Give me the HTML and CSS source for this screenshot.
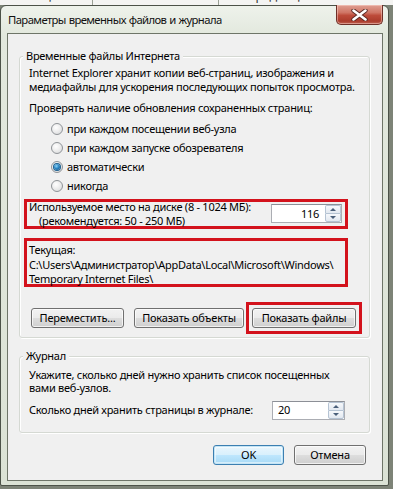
FILE: index.html
```html
<!DOCTYPE html>
<html lang="ru">
<head>
<meta charset="utf-8">
<title>Параметры временных файлов и журнала</title>
<link rel="stylesheet" href="styles.css">
</head>
<body>
<div class="screen">
  <div class="tabs">
    <div class="tab tab-1"><span>Общие</span></div>
    <div class="tab tab-2"><span>Безопасность</span></div>
    <div class="tab tab-3"><span>Конфиденциальность</span></div>
  </div>
  <div class="window">
    <div class="titlebar">
      <div class="title">Параметры временных файлов и журнала</div>
      <div class="close">
        <svg width="17" height="12" viewBox="0 0 17 12" aria-hidden="true">
          <path d="M2.5 1.5 L14.5 10.5 M14.5 1.5 L2.5 10.5" stroke="#5a2a24" stroke-width="4.4" stroke-linecap="round"/>
          <path d="M2.5 1.5 L14.5 10.5 M14.5 1.5 L2.5 10.5" stroke="#ffffff" stroke-width="2.6" stroke-linecap="round"/>
        </svg>
      </div>
    </div>
    <div class="client">
      <div class="group group-temp">
        <div class="legend">Временные файлы Интернета</div>
        <p class="text desc">Internet Explorer хранит копии веб-страниц, изображения и<br>медиафайлы для ускорения последующих попыток просмотра.</p>
        <p class="text check">Проверять наличие обновления сохраненных страниц:</p>
        <div class="radios">
          <div class="radio"><span class="circle"></span>при каждом посещении веб-узла</div>
          <div class="radio"><span class="circle"></span>при каждом запуске обозревателя</div>
          <div class="radio"><span class="circle checked"></span>автоматически</div>
          <div class="radio"><span class="circle"></span>никогда</div>
        </div>
        <div class="mark disk">
          <div class="disk-text">
            <div>Используемое место на диске (8 - 1024 МБ):</div>
            <div class="rec">(рекомендуется: 50 - 250 МБ)</div>
          </div>
          <div class="spin spin-right">
            <span class="spin-value">116</span>
            <span class="spin-arrows"><span class="arrow up"></span><span class="arrow down"></span></span>
          </div>
        </div>
        <div class="mark current">
          <div class="text cur-label">Текущая:</div>
          <div class="text path">C:\Users\Администратор\AppData\Local\Microsoft\Windows\<br>Temporary Internet Files\</div>
        </div>
        <div class="btn-row">
          <button class="btn btn-move">Переместить...</button>
          <button class="btn btn-objects">Показать объекты</button>
          <span class="mark-btn"><button class="btn btn-files">Показать файлы</button></span>
        </div>
      </div>
      <div class="group group-log">
        <div class="legend">Журнал</div>
        <p class="text desc">Укажите, сколько дней нужно хранить список посещенных<br>вами веб-узлов.</p>
        <div class="days">
          <span>Сколько дней хранить страницы в журнале:</span>
          <div class="spin spin-left">
            <span class="spin-value">20</span>
            <span class="spin-arrows"><span class="arrow up"></span><span class="arrow down"></span></span>
          </div>
        </div>
      </div>
      <div class="footer">
        <button class="btn btn-ok">OK</button>
        <button class="btn btn-cancel">Отмена</button>
      </div>
    </div>
  </div>
</div>
</body>
</html>
```

FILE: styles.css
```css
* { box-sizing: border-box; }
html, body { margin: 0; padding: 0; }
body {
  width: 393px;
  height: 489px;
  overflow: hidden;
  background: #6f756b;
  font-family: "Noto Sans", "Open Sans", "DejaVu Sans", sans-serif;
  color: #000;
}
.screen {
  width: 393px;
  height: 489px;
  overflow: hidden;
  background: #7d8377;
}

/* parent dialog tabs, mostly hidden behind */
.tabs {
  display: flex;
  height: 5px;
  overflow: hidden;
  background: #f4f4f2;
}
.tab {
  height: 5px;
  overflow: hidden;
  border-right: 1px solid #9aa095;
  font-size: 12.5px;
  color: #333;
  text-align: center;
  white-space: nowrap;
}
.tab span { display: block; line-height: 14px; margin-top: -11px; }
.tab-1 { width: 93px; padding-right: 4px; }
.tab-2 { width: 126px; }
.tab-3 { flex: 1; border-right: 0; padding-right: 20px; }

/* window frame */
.window {
  width: 389px;
  height: 481px;
  border: 1px solid #4c5248;
  border-radius: 6px 6px 2px 2px;
  background: linear-gradient(180deg, #eef2eb 0, #e2e8dd 30px, #dbe2d5 100%);
  display: flex;
  flex-direction: column;
}
.titlebar {
  height: 27px;
  flex: none;
  display: flex;
  align-items: flex-start;
  justify-content: space-between;
}
.title {
  font-size: 11.3px;
  letter-spacing: -0.6px;
  word-spacing: 0.5px;
  line-height: 16px;
  margin: 6px 0 0 7px;
  color: #111;
  white-space: nowrap;
}
.close {
  width: 47px;
  height: 20px;
  margin: -1px 5px 0 0;
  border: 1px solid #6d2f27;
  border-top: 0;
  border-radius: 0 0 5px 5px;
  background: linear-gradient(180deg, #e0a093 0, #cf7565 40%, #bd4b3a 55%, #ab3c2c 85%, #c06555 100%);
  display: flex;
  align-items: center;
  justify-content: center;
  box-shadow: inset 0 0 0 1px rgba(255,220,210,0.45);
}
.close svg { display: block; }

.client {
  width: 376px;
  height: 448px;
  flex: none;
  margin-left: 6px;
  border: 1px solid #6e7568;
  background: #f0f0f0;
  display: flex;
  flex-direction: column;
  font-size: 11px;
  letter-spacing: -0.27px;
  line-height: 13.5px;
  white-space: nowrap;
}

/* group boxes */
.group {
  margin-left: 11px;
  width: 351px;
  border: 1px solid #d5d9d3;
  border-radius: 3px;
  box-shadow: inset 1px 1px 0 #fff, 1px 1px 0 #fff;
  padding: 0 8px 0 9px;
  display: flex;
  flex-direction: column;
}
.group-temp { margin-top: 22px; padding-bottom: 9px; }
.group-log { margin-top: 18px; padding-bottom: 12px; }
.legend {
  align-self: flex-start;
  margin: -8px 0 0 -6px;
  padding: 0 3px;
  background: #f0f0f0;
  line-height: 14px;
}
.text { margin: 0; }
.group-temp .desc { margin-top: 3px; }
.check { margin-top: 8px; }

.radios {
  display: flex;
  flex-direction: column;
  margin-top: 5px;
  padding-left: 22px;
}
.radio {
  height: 19px;
  display: flex;
  align-items: center;
}
.circle {
  width: 12px;
  height: 12px;
  border-radius: 50%;
  border: 1px solid #8f9397;
  background: radial-gradient(circle at 40% 35%, #ffffff 0, #f0f0f0 40%, #d4d6d8 100%);
  margin-right: 4px;
  flex: none;
  display: flex;
  align-items: center;
  justify-content: center;
}
.circle.checked::after {
  content: "";
  width: 6px;
  height: 6px;
  border-radius: 50%;
  background: radial-gradient(circle at 40% 35%, #8fd3f5 0, #2a86c4 45%, #124e7e 100%);
  box-shadow: 0 0 0 1px #1c5f8f;
}

/* red annotation boxes */
.mark {
  border: 3px solid #d3121c;
  margin-left: -5px;
  width: 324px;
}
.disk {
  margin-top: 3px;
  height: 30px;
  display: flex;
  align-items: center;
  justify-content: space-between;
  padding: 0 3px 0 2px;
}
.disk-text { line-height: 13.5px; }
.rec { padding-left: 10px; }
.current {
  margin-top: 9px;
  height: 49px;
  padding: 2px 2px 0 2px;
}
.path { margin-top: 2px; line-height: 13.5px; }

.spin {
  width: 71px;
  height: 19px;
  border: 1px solid #abadb3;
  border-top-color: #8c8f96;
  background: #fff;
  display: flex;
  align-items: center;
  padding: 0 0 0 4px;
}
.spin-value { flex: 1; }
.spin-right .spin-value { text-align: right; padding-right: 6px; }
.spin-arrows {
  width: 16px;
  height: 17px;
  display: flex;
  flex-direction: column;
}
.arrow {
  flex: 1;
  border: 1px solid #b5c3d3;
  background: linear-gradient(180deg, #f6f8fb 0, #e2e8f0 100%);
  display: flex;
  align-items: center;
  justify-content: center;
}
.arrow.up { border-bottom-width: 0; border-radius: 2px 2px 0 0; }
.arrow.down { border-radius: 0 0 2px 2px; }
.arrow::after {
  content: "";
  width: 0;
  height: 0;
  border-left: 3px solid transparent;
  border-right: 3px solid transparent;
}
.arrow.up::after { border-bottom: 3px solid #4a5f7a; }
.arrow.down::after { border-top: 3px solid #4a5f7a; }

/* buttons */
.btn {
  font: inherit;
  font-size: 11px;
  letter-spacing: -0.2px;
  line-height: 13px;
  color: #000;
  height: 20px;
  padding: 0;
  border: 1px solid #707070;
  border-radius: 3px;
  background: linear-gradient(180deg, #f2f2f2 0, #ebebeb 48%, #dddddd 52%, #cfcfcf 100%);
  box-shadow: inset 0 0 0 1px rgba(255,255,255,0.7);
}
.btn-row {
  display: flex;
  align-items: center;
  margin-top: 21px;
  padding-left: 2px;
}
.btn-move { width: 93px; }
.btn-objects { width: 110px; margin-left: 10px; }
.mark-btn {
  margin: -6px -6px -6px 2px;
  padding: 3px;
  border: 3px solid #d3121c;
  display: flex;
}
.btn-files { width: 104px; }

.group-log .desc { margin-top: 5px; }
.days {
  margin-top: 6px;
  display: flex;
  align-items: center;
  justify-content: space-between;
  padding-right: 16px;
}
.spin-left { width: 73px; }
.spin-left .spin-value { padding-left: 1px; }

.footer {
  display: flex;
  justify-content: flex-end;
  gap: 10px;
  margin-top: 12px;
  padding-right: 16px;
}
.btn-ok {
  width: 71px;
  border-color: #3c7fb1;
  background: linear-gradient(180deg, #eaf6fd 0, #d9f0fc 48%, #bee6fd 52%, #a7d9f5 100%);
  box-shadow: inset 0 0 0 1px #c4e5f6, inset 0 0 0 2px rgba(255,255,255,0.5);
}
.btn-cancel { width: 72px; }
```
